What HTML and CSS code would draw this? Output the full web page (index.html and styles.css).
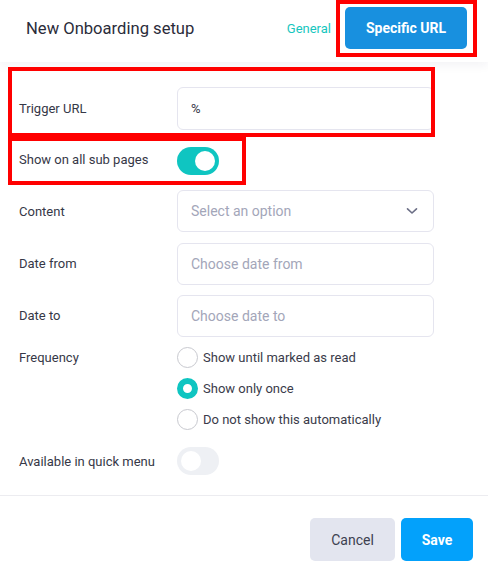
FILE: index.html
```html
<!DOCTYPE html>
<html>
<head>
<meta charset="utf-8">
<link rel="stylesheet" href="styles.css">
</head>
<body>
<div class="modal">
  <header class="head">
    <h1 class="title">New Onboarding setup</h1>
    <div class="tabs">
      <span class="tab-link">General</span>
      <button class="tab-btn">Specific URL</button>
    </div>
  </header>
  <main class="form">
    <div class="row row-input">
      <label class="lbl">Trigger URL</label>
      <div class="field"><span class="val">%</span></div>
    </div>
    <div class="row row-toggle first-toggle">
      <label class="lbl">Show on all sub pages</label>
      <span class="toggle on"><span class="knob"></span></span>
    </div>
    <div class="row row-input gap15">
      <label class="lbl">Content</label>
      <div class="field select"><span class="ph">Select an option</span>
        <svg class="chev" width="12" height="8" viewBox="0 0 12 8"><path d="M1.5 1.8 L6 6 L10.5 1.8" fill="none" stroke="#6c6f86" stroke-width="1.6" stroke-linecap="round" stroke-linejoin="round"/></svg>
      </div>
    </div>
    <div class="row row-input gap11">
      <label class="lbl">Date from</label>
      <div class="field"><span class="ph">Choose date from</span></div>
    </div>
    <div class="row row-input gap10">
      <label class="lbl">Date to</label>
      <div class="field"><span class="ph">Choose date to</span></div>
    </div>
    <div class="row row-radio">
      <label class="lbl lbl-top">Frequency</label>
      <div class="radios">
        <div class="radio-item"><span class="radio"></span><span>Show until marked as read</span></div>
        <div class="radio-item"><span class="radio checked"></span><span>Show only once</span></div>
        <div class="radio-item"><span class="radio"></span><span>Do not show this automatically</span></div>
      </div>
    </div>
    <div class="row row-toggle last-toggle">
      <label class="lbl">Available in quick menu</label>
      <span class="toggle"><span class="knob"></span></span>
    </div>
  </main>
  <footer class="foot">
    <button class="btn btn-cancel">Cancel</button>
    <button class="btn btn-save">Save</button>
  </footer>
  <div class="mark mark-1"></div>
  <div class="mark mark-2"></div>
  <div class="mark mark-3"></div>
</div>
</body>
</html>
```
FILE: styles.css
```css
* { box-sizing: border-box; }
html, body { margin: 0; padding: 0; background: #fff; }
body { font-family: Roboto, "Liberation Sans", sans-serif; color: #363847; }
.modal { position: relative; width: 488px; height: 576px; background: #fff; overflow: hidden; }

.head {
  height: 62px;
  display: flex;
  align-items: center;
  justify-content: space-between;
  padding: 0 21px 6px 26px;
  box-shadow: 0 3px 10px rgba(30, 40, 80, 0.06);
  position: relative;
  z-index: 1;
  background: #fff;
}
.title { margin: 0; font-size: 16.6px; font-weight: 400; color: #2b2c3a; }
.tabs { display: flex; align-items: center; }
.tab-link { color: #17c6be; font-size: 13px; margin-right: 14px; }
.tab-btn {
  width: 122px; height: 42px;
  border: none; border-radius: 5px;
  background: #1890df; color: #fff;
  font-family: inherit; font-size: 14px; font-weight: 700;
}

.form { padding: 25px 54px 20px 19px; }
.row { display: flex; align-items: center; }
.lbl { width: 158px; font-size: 13px; color: #363847; flex: none; }
.field {
  flex: 1;
  height: 43px;
  border: 1px solid #e5e5ef;
  border-radius: 6px;
  display: flex; align-items: center;
  padding: 0 13px;
  font-size: 14px;
}
.gap15 .field, .gap11 .field, .gap10 .field { height: 42px; }
.val { color: #363847; font-size: 13px; }
.ph { color: #a3a6b9; }
.select { justify-content: space-between; padding-right: 15px; }
.chev { display: block; }

.first-toggle { margin-top: 17px; }
.gap15 { margin-top: 15px; }
.gap11 { margin-top: 11px; }
.gap10 { margin-top: 10px; }
.gap11 .lbl, .gap10 .lbl { margin-top: -2px; }

.toggle {
  width: 42px; height: 28px;
  border-radius: 14px;
  background: #eef0f4;
  position: relative;
  display: inline-block;
}
.toggle .knob {
  position: absolute; top: 4px; left: 4px;
  width: 20px; height: 20px; border-radius: 50%;
  background: #fff;
}
.toggle.on { background: #0fc5c1; }
.toggle.on .knob { left: auto; right: 4px; }
.first-toggle .lbl { margin-top: -3px; }

.row-radio { margin-top: 10px; align-items: flex-start; }
.lbl-top { line-height: 21px; }
.radios { display: flex; flex-direction: column; gap: 10px; }
.radio-item { display: flex; align-items: center; height: 21px; font-size: 13px; color: #3a3b4a; }
.radio {
  width: 21px; height: 21px; border-radius: 50%;
  border: 1px solid #c8c9cf;
  margin-right: 5px;
  flex: none;
}
.radio.checked { border: 6.5px solid #0fc5c1; background: #fff; }

.last-toggle { margin-top: 17px; }

.foot {
  border-top: 1px solid #ececf0;
  display: flex;
  justify-content: flex-end;
  padding: 22px 15px 0 0;
  gap: 6px;
}
.btn {
  height: 43px; border: none; border-radius: 5px;
  font-family: inherit; font-size: 14px;
}
.btn-cancel { width: 85px; background: #e3e5ef; color: #3d3f50; }
.btn-save { width: 72px; background: #03a1fb; color: #fff; font-weight: 700; }

.mark { position: absolute; border: 4px solid #ff0000; z-index: 5; pointer-events: none; }
.mark-1 { left: 336px; top: 0; width: 141px; height: 57px; }
.mark-2 { left: 8px; top: 67px; width: 427px; height: 70px; }
.mark-3 { left: 8px; top: 137px; width: 238px; height: 48px; }
```
